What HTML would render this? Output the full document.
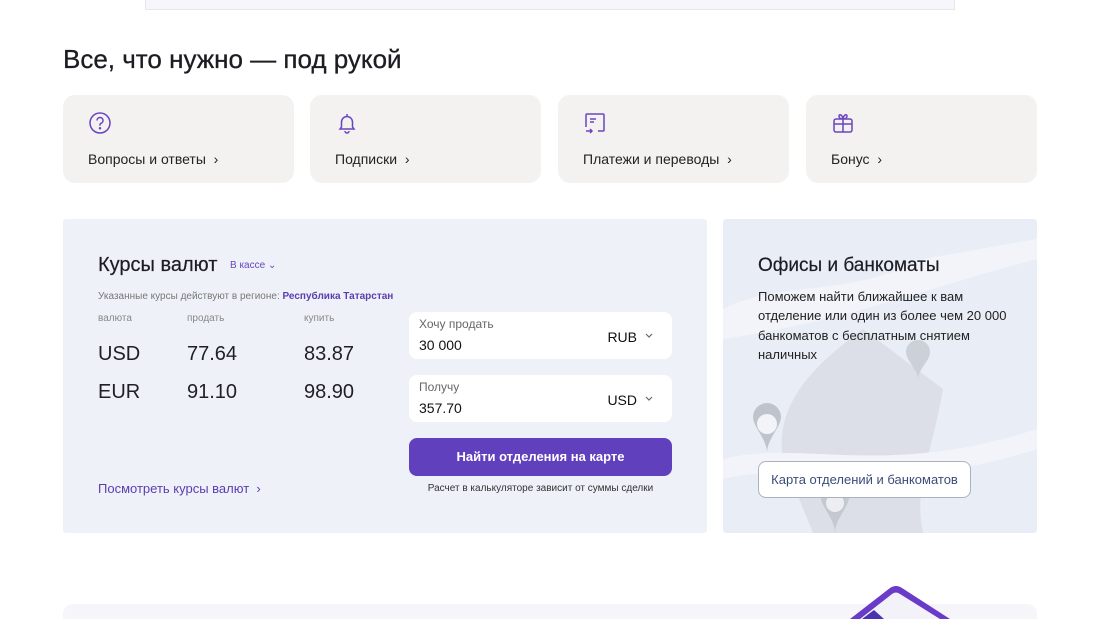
<!DOCTYPE html>
<html><head><meta charset="utf-8"><style>
*{box-sizing:border-box;margin:0;padding:0}
html,body{width:1100px;height:619px;overflow:hidden}
body{background:#fff;font-family:"Liberation Sans",sans-serif;color:#1f1f24;position:relative}
.abs{position:absolute}
.card{position:absolute;top:95px;width:231px;height:88px;background:#f3f2f1;border-radius:12px}
.card svg{position:absolute;left:26px;top:17px}
.card span{position:absolute;left:25px;top:56px;font-size:14px;color:#222}
.field{position:absolute;left:409px;width:263px;height:47px;background:#fff;border-radius:8px}
.field .l{position:absolute;left:10px;top:5px;font-size:12px;color:#666}
.field .v{position:absolute;left:10px;top:25px;font-size:14px;color:#111}
.field .c{position:absolute;right:35px;top:17px;font-size:14px;color:#111}
.field svg{position:absolute;right:19px;top:21px}
</style></head><body>
<div class="abs" style="left:145px;top:-1px;width:810px;height:11px;background:#f6f6fb;border:1px solid #e6e6ef;border-top:none"></div>
<div class="abs" style="left:63px;top:44px;font-size:26px;color:#1c1c22;-webkit-text-stroke:0.3px #1c1c22">Все, что нужно — под рукой</div>

<div class="card" style="left:63px"><svg width="22" height="22" viewBox="0 0 22 22" fill="none" stroke="#6a45c0" stroke-width="1.5"><circle cx="11" cy="11" r="10"/><path d="M8 8.5a3 3 0 1 1 4 2.8c-.7.3-1 .8-1 1.5v.8"/><circle cx="11" cy="16.2" r=".5" fill="#6a45c0"/></svg><span>Вопросы и ответы &nbsp;›</span></div>
<div class="card" style="left:310px"><svg width="22" height="22" viewBox="0 0 22 22" fill="none" stroke="#6a45c0" stroke-width="1.5"><path d="M11 2v2M5.5 15V10a5.5 5.5 0 0 1 11 0v5l1.5 2H4z"/><path d="M9 19a2 2 0 0 0 4 0"/></svg><span>Подписки &nbsp;›</span></div>
<div class="card" style="left:558px"><svg width="22" height="22" viewBox="0 0 22 22" fill="none" stroke="#6a45c0" stroke-width="1.5"><path d="M2 15V3a1 1 0 0 1 1-1h16a1 1 0 0 1 1 1v15a1 1 0 0 1-1 1h-5M6 7h6M6 10h4M2 19h6M6 17l2 2-2 2"/></svg><span>Платежи и переводы &nbsp;›</span></div>
<div class="card" style="left:806px"><svg width="22" height="22" viewBox="0 0 22 22" fill="none" stroke="#6a45c0" stroke-width="1.5"><rect x="2" y="7" width="18" height="13" rx="2"/><path d="M11 7v13M2 12h18M11 7c-2 0-4-1-4-3s3-2 4 3c1-5 4-5 4-3s-2 3-4 3"/></svg><span>Бонус &nbsp;›</span></div>

<div class="abs" style="left:63px;top:219px;width:644px;height:314px;background:#eef2f8;border-radius:3px"></div>
<div class="abs" style="left:98px;top:254px;font-size:20px;color:#1c1c22;-webkit-text-stroke:0.2px #1c1c22">Курсы валют</div>
<div class="abs" style="left:230px;top:260px;font-size:10px;color:#6a45c0">В кассе ⌄</div>
<div class="abs" style="left:98px;top:291px;font-size:10px;color:#777">Указанные курсы действуют в регионе: <b style="color:#5b3db0">Республика Татарстан</b></div>
<div class="abs" style="left:98px;top:313px;font-size:10px;color:#888">валюта</div>
<div class="abs" style="left:187px;top:313px;font-size:10px;color:#888">продать</div>
<div class="abs" style="left:304px;top:313px;font-size:10px;color:#888">купить</div>
<div class="abs" style="left:98px;top:343px;font-size:20px">USD</div>
<div class="abs" style="left:187px;top:343px;font-size:20px">77.64</div>
<div class="abs" style="left:304px;top:343px;font-size:20px">83.87</div>
<div class="abs" style="left:98px;top:381px;font-size:20px">EUR</div>
<div class="abs" style="left:187px;top:381px;font-size:20px">91.10</div>
<div class="abs" style="left:304px;top:381px;font-size:20px">98.90</div>
<div class="abs" style="left:98px;top:481px;font-size:13px;color:#5b3db0">Посмотреть курсы валют &nbsp;›</div>

<div class="field" style="top:312px"><div class="l">Хочу продать</div><div class="v">30 000</div><div class="c">RUB</div><svg width="8" height="5" viewBox="0 0 8 5" fill="none" stroke="#667" stroke-width="1.2"><path d="M1 1l3 3 3-3"/></svg></div>
<div class="field" style="top:375px"><div class="l">Получу</div><div class="v">357.70</div><div class="c">USD</div><svg width="8" height="5" viewBox="0 0 8 5" fill="none" stroke="#667" stroke-width="1.2"><path d="M1 1l3 3 3-3"/></svg></div>
<div class="abs" style="left:409px;top:438px;width:263px;height:38px;background:#6140bd;border-radius:8px;color:#fff;font-size:13px;font-weight:bold;text-align:center;line-height:38px">Найти отделения на карте</div>
<div class="abs" style="left:409px;top:483px;width:263px;text-align:center;font-size:10px;color:#333">Расчет в калькуляторе зависит от суммы сделки</div>

<div class="abs" style="left:723px;top:219px;width:314px;height:314px;background:#e9edf6;border-radius:3px;overflow:hidden">
<svg width="314" height="314" style="position:absolute;left:0;top:0">
<path d="M60 240 C50 180 100 140 140 110 L220 170 C210 230 190 270 200 314 L90 314 Z" fill="#dcdfe7"/>
<path d="M0 90 C60 60 120 80 200 40 L314 20 L314 40 C200 70 130 100 0 120Z" fill="#f2f4f9"/>
<path d="M0 240 C80 220 160 260 314 210 L314 230 C160 280 80 240 0 260Z" fill="#f2f4f9"/>
<path d="M30 198a14 14 0 0 1 28 0c0 10-14 22-14 36c0-14-14-26-14-36z" fill="#bfc4cc"/><circle cx="44" cy="205" r="10" fill="#f3f4f7"/>
<path d="M183 133a12 12 0 0 1 24 0c0 9-12 17-12 28c0-11-12-19-12-28z" fill="#ccd0d7"/>
<path d="M98 278a14 14 0 0 1 28 0c0 10-14 22-14 36c0-14-14-26-14-36z" fill="#c4c8cf"/><circle cx="112" cy="284" r="9" fill="#eceef2"/>
</svg>
<div class="abs" style="left:35px;top:36px;font-size:19px;color:#1c1c22;-webkit-text-stroke:0.2px #1c1c22">Офисы и банкоматы</div>
<div class="abs" style="left:35px;top:68px;width:260px;font-size:13px;line-height:19.3px;color:#222">Поможем найти ближайшее к вам отделение или один из более чем 20 000 банкоматов с бесплатным снятием наличных</div>
<div class="abs" style="left:35px;top:242px;width:213px;height:37px;background:#fff;border:1px solid #aab2c0;border-radius:8px;font-size:13px;color:#3a4d78;text-align:center;line-height:35px">Карта отделений и банкоматов</div>
</div>

<div class="abs" style="left:0;top:580px;width:1100px;height:39px;overflow:hidden">
<div class="abs" style="left:63px;top:24px;width:974px;height:30px;background:#f5f5fa;border-radius:10px"></div>
<svg class="abs" style="left:840px;top:0" width="120" height="39" viewBox="0 0 120 39">
<path d="M10 39 L50 8 Q56 4 62 8 L110 39 Z" fill="#6a3bc8"/>
<path d="M20 39 L52 14 Q56 11 60 14 L100 39 Z" fill="#f3f2f8"/>
<path d="M22 39 L34 30 L44 39 Z" fill="#4a35b0"/>
</svg>
</div>
</body></html>
